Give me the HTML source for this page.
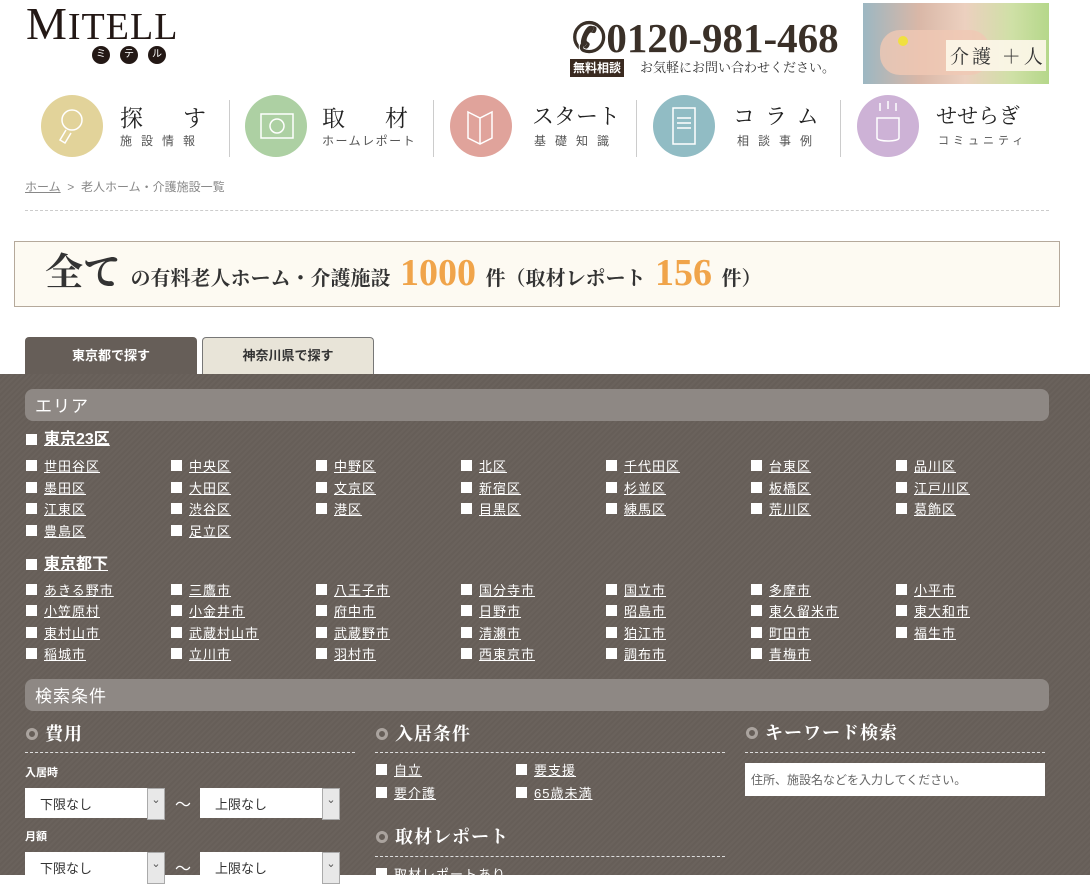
<!DOCTYPE html>
<html><head><meta charset="utf-8">
<style>
*{margin:0;padding:0;box-sizing:border-box}
body{width:1090px;height:875px;overflow:hidden;background:#fff;position:relative;font-family:"Liberation Sans","Noto Sans CJK JP",sans-serif;color:#333}
.a{position:absolute}
.serif{font-family:"Liberation Serif","Noto Serif CJK SC",serif}
.circ{position:absolute;width:62px;height:62px;border-radius:50%}
.nt{position:absolute;font-family:"Liberation Serif","Noto Serif CJK SC",serif;font-size:23px;color:#222;letter-spacing:2px;white-space:nowrap}
.ns{position:absolute;font-size:12px;color:#555;letter-spacing:9px;white-space:nowrap}
.sep{position:absolute;top:100px;width:1px;height:57px;background:#ccc}
.panel{position:absolute;left:0;top:374px;width:1090px;height:501px;background:#665e58;background-image:repeating-linear-gradient(135deg,rgba(255,255,255,.025) 0 2px,rgba(0,0,0,0) 2px 4px)}
.bar{position:absolute;left:25px;width:1024px;height:32px;border-radius:8px;background:#8e8884;color:#fff;font-size:17px;padding:3px 10px;letter-spacing:1px}
.it{position:absolute;color:#fff;font-size:13px;line-height:18px;text-decoration:underline;letter-spacing:1px;padding-left:18px;white-space:nowrap}
.it:before{content:"";position:absolute;left:0;top:2px;width:11px;height:11px;background:#fff}
.grp{position:absolute;color:#fff;font-size:16px;font-weight:bold;line-height:20px;text-decoration:underline;padding-left:18px}
.grp:before{content:"";position:absolute;left:0;top:4px;width:11px;height:11px;background:#fff}
.h{position:absolute;color:#fff;font-family:"Liberation Serif","Noto Serif CJK SC",serif;font-size:18px;font-weight:bold;padding-left:20px;line-height:22px;letter-spacing:1px;white-space:nowrap}
.h:before{content:"";position:absolute;left:1px;top:5px;width:12px;height:12px;border-radius:50%;border:3px solid #aaa39e;background:#665e58;box-sizing:border-box}
.dash{position:absolute;height:0;border-top:1px dashed #ddd}
.lbl{position:absolute;color:#fff;font-size:11px;font-weight:bold}
.sel{position:absolute;width:140px;height:30px;background:#fff;font-size:13px;padding:6px 0 0 15px;color:#333}
.sel:after{content:"⌄";position:absolute;right:0;top:0;width:16px;height:30px;background:#e8e8e8;border:1px solid #aaa;font-size:11px;text-align:center;line-height:22px;color:#555}
.til{position:absolute;color:#fff;font-size:16px}
.b20{font-size:20px;font-weight:bold}
</style></head><body>
<div class="a serif" style="left:26px;top:-2px;font-size:46px;color:#231815;letter-spacing:1px;line-height:52px">M<span style="font-size:38px">ITELL</span></div>
<div class="a" style="left:92px;top:46px;width:18px;height:18px;border-radius:50%;background:#231815;color:#fff;font-size:10px;text-align:center;line-height:18px">ミ</div>
<div class="a" style="left:120px;top:46px;width:18px;height:18px;border-radius:50%;background:#231815;color:#fff;font-size:10px;text-align:center;line-height:18px">テ</div>
<div class="a" style="left:148px;top:46px;width:18px;height:18px;border-radius:50%;background:#231815;color:#fff;font-size:10px;text-align:center;line-height:18px">ル</div>
<div class="a serif" style="left:572px;top:14px;font-size:41px;font-weight:bold;color:#3a3028;line-height:48px;white-space:nowrap">✆0120-981-468</div>
<div class="a" style="left:570px;top:59px;background:#3a2a20;color:#fff;font-size:12px;font-weight:bold;padding:1px 3px;line-height:16px">無料相談</div>
<div class="a serif" style="left:640px;top:59px;font-size:13px;color:#333;line-height:18px">お気軽にお問い合わせください。</div>
<div class="a" style="left:863px;top:3px;width:186px;height:81px;background:linear-gradient(90deg,#9cb7c2 0%,#d9b7a7 30%,#ecd0bf 55%,#cfe0a6 80%,#b5d78a 100%)"></div>
<div class="a" style="left:880px;top:30px;width:110px;height:45px;border-radius:20px;background:#f0c8b4;opacity:.8"></div>
<div class="a" style="left:898px;top:36px;width:10px;height:10px;border-radius:50%;background:#f0e040"></div>
<div class="a serif" style="left:946px;top:40px;width:100px;height:31px;background:rgba(252,246,232,.92);font-size:19px;color:#333;letter-spacing:3px;padding:2px 0 0 4px">介護 ＋人</div>
<div class="circ" style="left:41px;top:95px;background:#e2d39a"></div>
<div class="nt" style="left:120px;top:100px;letter-spacing:40px">探す</div>
<div class="ns" style="left:120px;top:132px">施設情報</div>
<div class="sep" style="left:229px"></div>
<div class="circ" style="left:245px;top:95px;background:#add0a3"></div>
<div class="nt" style="left:322px;top:100px;letter-spacing:40px">取材</div>
<div class="ns" style="left:322px;top:132px;letter-spacing:1.5px">ホームレポート</div>
<div class="sep" style="left:433px"></div>
<div class="circ" style="left:450px;top:95px;background:#e0a39b"></div>
<div class="nt" style="left:532px;top:100px;letter-spacing:0;font-size:22px">スタート</div>
<div class="ns" style="left:534px;top:132px">基礎知識</div>
<div class="sep" style="left:636px"></div>
<div class="circ" style="left:653px;top:95px;background:#91bcc4"></div>
<div class="nt" style="left:733px;top:100px;letter-spacing:10px;font-size:22px">コラム</div>
<div class="ns" style="left:737px;top:132px">相談事例</div>
<div class="sep" style="left:840px"></div>
<div class="circ" style="left:857px;top:95px;background:#cdb2d6"></div>
<div class="nt" style="left:936px;top:100px;letter-spacing:0;font-size:21px">せせらぎ</div>
<div class="ns" style="left:938px;top:132px;letter-spacing:4px;font-size:11px">コミュニティ</div>
<svg class="a" style="left:0;top:0" width="1090" height="170" fill="none" stroke="#fff" stroke-width="1.5">
<circle cx="72" cy="120" r="10"/><path d="M66 130l-6 10 5 3 6-10"/>
<rect x="261" y="114" width="32" height="24"/><circle cx="277" cy="126" r="7"/>
<path d="M468 112l12 6 12-6v26l-12 6-12-6z M480 118v26"/>
<rect x="673" y="108" width="22" height="36"/><path d="M677 118h14M677 123h14M677 128h14"/>
<path d="M877 118h22v20c0 4-22 4-22 0z M880 103v8M888 101v8M896 103v8"/>
</svg>
<div class="a" style="left:25px;top:178px;font-size:12px;color:#888"><span style="text-decoration:underline">ホーム</span>&nbsp;&nbsp;&gt;&nbsp;&nbsp;老人ホーム・介護施設一覧</div>
<div class="dash" style="left:25px;top:210px;width:1024px;border-top-color:#ccc"></div>
<div class="a" style="left:14px;top:241px;width:1046px;height:66px;background:#fdfaf2;border:1px solid #b5a99b"></div>
<div class="a serif" style="left:45px;top:250px;font-size:38px;color:#333;line-height:46px;white-space:nowrap"><b>全て</b> <span class="b20">の有料老人ホーム・介護施設</span> <span style="color:#f0a44a;font-size:38px;font-weight:bold">1000</span> <span class="b20">件（取材レポート</span> <span style="color:#f0a44a;font-weight:bold">156</span> <span class="b20">件）</span></div>
<div class="a" style="left:25px;top:337px;width:172px;height:38px;background:#665e58;border-radius:4px 4px 0 0;color:#fff;font-size:13px;font-weight:bold;text-align:center;line-height:38px">東京都で探す</div>
<div class="a" style="left:202px;top:337px;width:172px;height:38px;background:#e8e4d8;border:1px solid #777;border-bottom:none;border-radius:4px 4px 0 0;color:#333;font-size:13px;font-weight:bold;text-align:center;line-height:36px">神奈川県で探す</div>
<div class="panel"></div>
<div class="bar" style="top:389px">エリア</div>
<div class="grp" style="left:26px;top:430px">東京23区</div>
<div class="it" style="left:26px;top:458px">世田谷区</div><div class="it" style="left:171px;top:458px">中央区</div><div class="it" style="left:316px;top:458px">中野区</div><div class="it" style="left:461px;top:458px">北区</div><div class="it" style="left:606px;top:458px">千代田区</div><div class="it" style="left:751px;top:458px">台東区</div><div class="it" style="left:896px;top:458px">品川区</div>
<div class="it" style="left:26px;top:480px">墨田区</div><div class="it" style="left:171px;top:480px">大田区</div><div class="it" style="left:316px;top:480px">文京区</div><div class="it" style="left:461px;top:480px">新宿区</div><div class="it" style="left:606px;top:480px">杉並区</div><div class="it" style="left:751px;top:480px">板橋区</div><div class="it" style="left:896px;top:480px">江戸川区</div>
<div class="it" style="left:26px;top:501px">江東区</div><div class="it" style="left:171px;top:501px">渋谷区</div><div class="it" style="left:316px;top:501px">港区</div><div class="it" style="left:461px;top:501px">目黒区</div><div class="it" style="left:606px;top:501px">練馬区</div><div class="it" style="left:751px;top:501px">荒川区</div><div class="it" style="left:896px;top:501px">葛飾区</div>
<div class="it" style="left:26px;top:523px">豊島区</div><div class="it" style="left:171px;top:523px">足立区</div>
<div class="grp" style="left:26px;top:555px">東京都下</div>
<div class="it" style="left:26px;top:582px">あきる野市</div><div class="it" style="left:171px;top:582px">三鷹市</div><div class="it" style="left:316px;top:582px">八王子市</div><div class="it" style="left:461px;top:582px">国分寺市</div><div class="it" style="left:606px;top:582px">国立市</div><div class="it" style="left:751px;top:582px">多摩市</div><div class="it" style="left:896px;top:582px">小平市</div>
<div class="it" style="left:26px;top:603px">小笠原村</div><div class="it" style="left:171px;top:603px">小金井市</div><div class="it" style="left:316px;top:603px">府中市</div><div class="it" style="left:461px;top:603px">日野市</div><div class="it" style="left:606px;top:603px">昭島市</div><div class="it" style="left:751px;top:603px">東久留米市</div><div class="it" style="left:896px;top:603px">東大和市</div>
<div class="it" style="left:26px;top:625px">東村山市</div><div class="it" style="left:171px;top:625px">武蔵村山市</div><div class="it" style="left:316px;top:625px">武蔵野市</div><div class="it" style="left:461px;top:625px">清瀬市</div><div class="it" style="left:606px;top:625px">狛江市</div><div class="it" style="left:751px;top:625px">町田市</div><div class="it" style="left:896px;top:625px">福生市</div>
<div class="it" style="left:26px;top:646px">稲城市</div><div class="it" style="left:171px;top:646px">立川市</div><div class="it" style="left:316px;top:646px">羽村市</div><div class="it" style="left:461px;top:646px">西東京市</div><div class="it" style="left:606px;top:646px">調布市</div><div class="it" style="left:751px;top:646px">青梅市</div>
<div class="bar" style="top:679px">検索条件</div>
<div class="h" style="left:25px;top:723px">費用</div>
<div class="dash" style="left:25px;top:752px;width:330px"></div>
<div class="lbl" style="left:25px;top:764px">入居時</div>
<div class="sel" style="left:25px;top:788px">下限なし</div>
<div class="til" style="left:175px;top:791px">～</div>
<div class="sel" style="left:200px;top:788px">上限なし</div>
<div class="lbl" style="left:25px;top:828px">月額</div>
<div class="sel" style="left:25px;top:852px">下限なし</div>
<div class="til" style="left:175px;top:855px">～</div>
<div class="sel" style="left:200px;top:852px">上限なし</div>
<div class="h" style="left:375px;top:723px">入居条件</div>
<div class="dash" style="left:375px;top:752px;width:350px"></div>
<div class="it" style="left:376px;top:762px">自立</div><div class="it" style="left:516px;top:762px">要支援</div>
<div class="it" style="left:376px;top:785px">要介護</div><div class="it" style="left:516px;top:785px">65歳未満</div>
<div class="h" style="left:375px;top:826px">取材レポート</div>
<div class="dash" style="left:375px;top:856px;width:350px"></div>
<div class="it" style="left:376px;top:866px">取材レポートあり</div>
<div class="h" style="left:745px;top:722px">キーワード検索</div>
<div class="dash" style="left:745px;top:752px;width:300px"></div>
<div class="a" style="left:745px;top:763px;width:300px;height:33px;background:#fff;font-size:12px;color:#666;padding:8px 0 0 6px">住所、施設名などを入力してください。</div>
</body></html>
